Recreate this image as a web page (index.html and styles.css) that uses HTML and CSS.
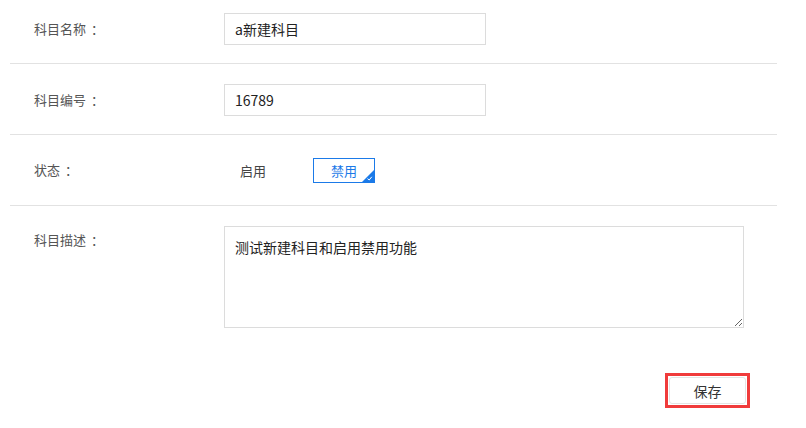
FILE: index.html
```html
<!DOCTYPE html>
<html lang="zh-CN">
<head>
<meta charset="utf-8">
<link rel="stylesheet" href="styles.css">
</head>
<body>
<form class="form">
  <div class="row row-first">
    <div class="label">科目名称<span class="colon">：</span></div>
    <div class="field"><input class="input" type="text" value="a新建科目"></div>
  </div>
  <div class="row">
    <div class="label">科目编号<span class="colon">：</span></div>
    <div class="field"><input class="input" type="text" value="16789"></div>
  </div>
  <div class="row row-status">
    <div class="label">状态<span class="colon">：</span></div>
    <div class="field options">
      <span class="option option-plain">启用</span>
      <span class="option option-active">禁用
        <svg class="corner" width="12" height="12" viewBox="0 0 12 12"><path d="M12 0 L12 12 L0 12 Z" fill="#1b7ae8"/><path d="M5.5 8.6 L7.2 10 L9.8 6.8" fill="none" stroke="#fff" stroke-width="1"/></svg>
      </span>
    </div>
  </div>
  <div class="row row-desc">
    <div class="label label-top">科目描述<span class="colon">：</span></div>
    <div class="field"><textarea class="textarea">测试新建科目和启用禁用功能</textarea></div>
  </div>
  <div class="actions">
    <div class="highlight"><button class="btn" type="button">保存</button></div>
  </div>
</form>
</body>
</html>
```
FILE: styles.css
```css
* { box-sizing: border-box; }
html, body {
  margin: 0;
  padding: 0;
  background: #fff;
  font-family: "Noto Sans CJK SC", "Noto Sans", sans-serif;
  color: #333;
}
.form {
  width: 767px;
  margin-left: 10px;
}
.row {
  display: flex;
  align-items: center;
  padding: 20px 0 18px;
  border-bottom: 1px solid #e2e2e2;
}
.row-first { padding-top: 13px; }
.row-status { padding: 19px 0 19px; }
.row-desc {
  align-items: flex-start;
  border-bottom: none;
  padding: 20px 0 18px;
}
.label {
  width: 214px;
  padding-left: 24px;
  font-size: 13px;
  color: #555;
  line-height: 32px;
}
.colon { margin-left: 5px; }
.label-top { line-height: 28px; }
.field { flex: 1; }
.input {
  display: block;
  width: 262px;
  height: 32px;
  border: 1px solid #dcdcdc;
  padding: 0 10px;
  font-family: inherit;
  font-size: 14px;
  color: #222;
  outline: none;
}
.options {
  display: flex;
  align-items: center;
  gap: 27px;
}
.option {
  position: relative;
  width: 62px;
  height: 25px;
  line-height: 23px;
  text-align: center;
  font-size: 13px;
  color: #444;
  border: 1px solid transparent;
}
.option-plain {
  text-align: left;
  padding-left: 15px;
}
.option-active {
  border-color: #1b7ae8;
  color: #1b7ae8;
}
.corner {
  position: absolute;
  right: 0;
  bottom: 0;
  display: block;
}
.textarea {
  display: block;
  width: 520px;
  height: 102px;
  border: 1px solid #dcdcdc;
  padding: 10px 10px;
  font-family: inherit;
  font-size: 14px;
  line-height: 20px;
  color: #222;
  resize: both;
  outline: none;
}
.actions {
  display: flex;
  justify-content: flex-end;
  padding-top: 27px;
  padding-right: 27px;
}
.highlight {
  border: 3px solid #f03b3b;
  padding: 1px;
}
.btn {
  display: block;
  width: 77px;
  height: 27px;
  border: 1px solid #e4e4e4;
  border-radius: 3px;
  background: #fff;
  font-family: inherit;
  font-size: 14px;
  color: #333;
  padding: 0;
}
```
